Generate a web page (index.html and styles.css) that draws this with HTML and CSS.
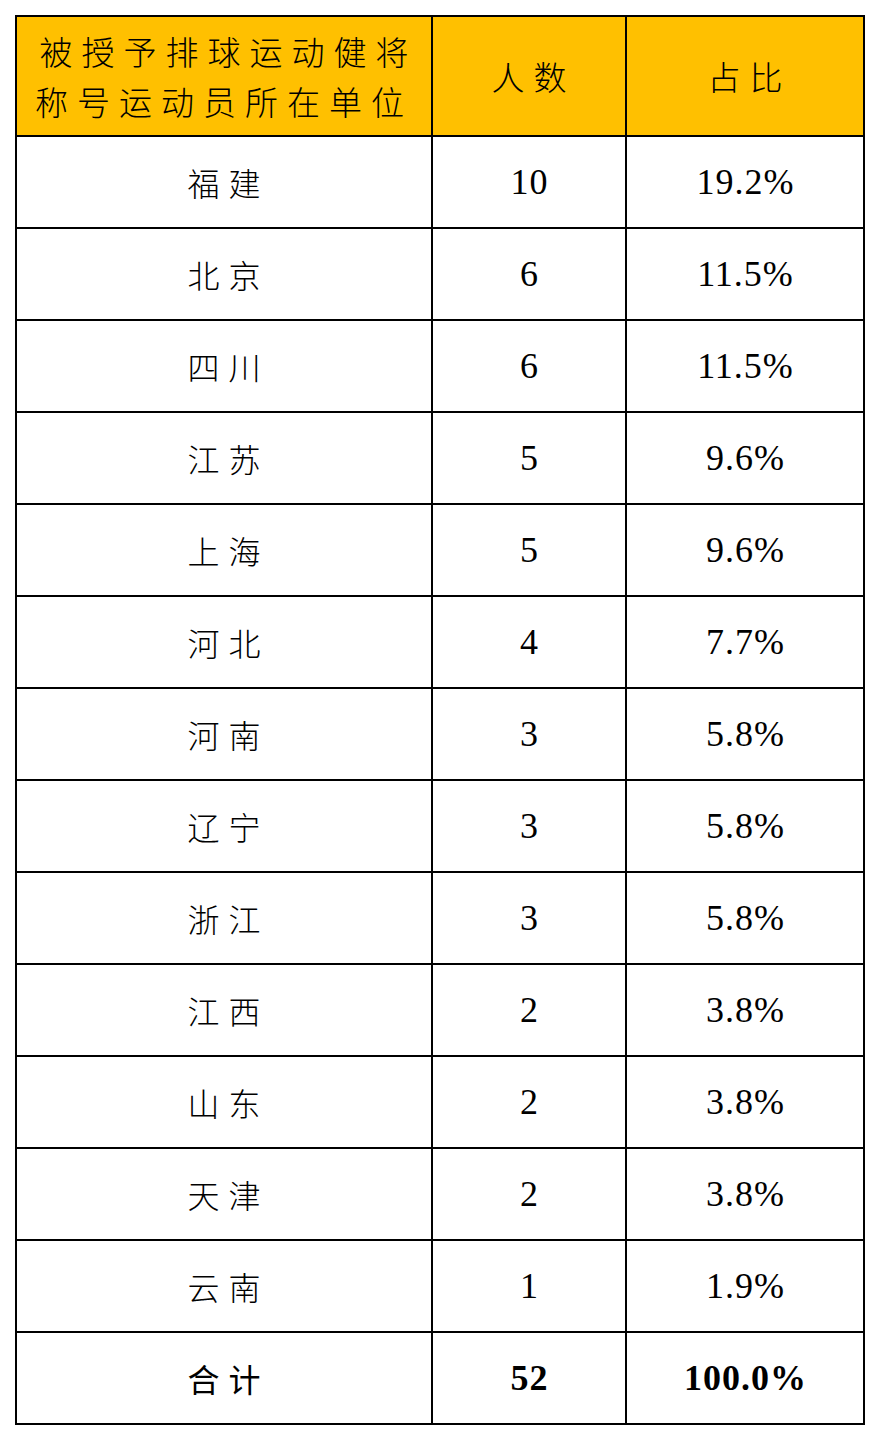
FILE: index.html
```html
<!DOCTYPE html>
<html lang="zh-CN">
<head>
<meta charset="utf-8">
<title>排球运动健将称号运动员所在单位</title>
<link rel="stylesheet" href="styles.css">
</head>
<body>
<table class="stats">
  <colgroup>
    <col class="c-unit">
    <col class="c-count">
    <col class="c-ratio">
  </colgroup>
  <thead>
    <tr class="head-row">
      <th class="zh head-unit">被授予排球运动健将<br>称号运动员所在单位</th>
      <th class="zh">人数</th>
      <th class="zh">占比</th>
    </tr>
  </thead>
  <tbody>
    <tr><td class="zh">福建</td><td class="num">10</td><td class="pct">19.2%</td></tr>
    <tr><td class="zh">北京</td><td class="num">6</td><td class="pct">11.5%</td></tr>
    <tr><td class="zh">四川</td><td class="num">6</td><td class="pct">11.5%</td></tr>
    <tr><td class="zh">江苏</td><td class="num">5</td><td class="pct">9.6%</td></tr>
    <tr><td class="zh">上海</td><td class="num">5</td><td class="pct">9.6%</td></tr>
    <tr><td class="zh">河北</td><td class="num">4</td><td class="pct">7.7%</td></tr>
    <tr><td class="zh">河南</td><td class="num">3</td><td class="pct">5.8%</td></tr>
    <tr><td class="zh">辽宁</td><td class="num">3</td><td class="pct">5.8%</td></tr>
    <tr><td class="zh">浙江</td><td class="num">3</td><td class="pct">5.8%</td></tr>
    <tr><td class="zh">江西</td><td class="num">2</td><td class="pct">3.8%</td></tr>
    <tr><td class="zh">山东</td><td class="num">2</td><td class="pct">3.8%</td></tr>
    <tr><td class="zh">天津</td><td class="num">2</td><td class="pct">3.8%</td></tr>
    <tr><td class="zh">云南</td><td class="num">1</td><td class="pct">1.9%</td></tr>
    <tr class="total"><td class="zh">合计</td><td class="num">52</td><td class="pct">100.0%</td></tr>
  </tbody>
</table>
</body>
</html>
```

FILE: styles.css
```css
html, body {
  margin: 0;
  padding: 0;
  background: #ffffff;
}

body {
  padding: 15px 0 0 15px;
}

.stats {
  border-collapse: collapse;
  table-layout: fixed;
  width: 848px;
  color: #000000;
}

.c-unit { width: 416px; }
.c-count { width: 194px; }
.c-ratio { width: 238px; }

.stats th,
.stats td {
  border: 2px solid #000000;
  text-align: center;
  vertical-align: middle;
  padding: 0;
}

.stats thead th {
  background: #ffc000;
  font-weight: 300;
}

.head-row { height: 120px; }

.stats tbody tr { height: 92px; }

.zh {
  font-family: "Noto Sans CJK SC", sans-serif;
  font-weight: 300;
  font-size: 32px;
  letter-spacing: 9px;
  text-indent: 9px;
}

.stats thead .zh {
  font-size: 33px;
  letter-spacing: 9px;
  text-indent: 9px;
}

.head-unit {
  line-height: 50px;
}

.num,
.pct {
  font-family: "Liberation Serif", "Times New Roman", serif;
  font-size: 36px;
  padding-top: 8px;
}

.num {
  letter-spacing: 1px;
  text-indent: 1px;
}

.pct {
  letter-spacing: 1px;
  text-indent: 1px;
}

.total .zh {
  font-weight: 400;
}

.total .num,
.total .pct {
  font-weight: 700;
}
```
